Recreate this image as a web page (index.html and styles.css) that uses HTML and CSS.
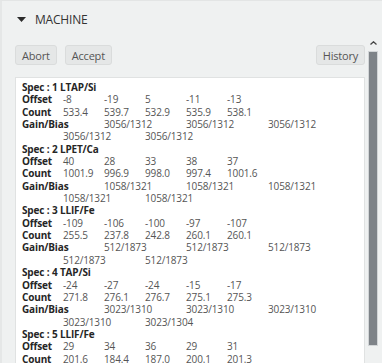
FILE: index.html
```html
<!DOCTYPE html>
<html>
<head>
<meta charset="utf-8">
<link rel="stylesheet" href="styles.css">
</head>
<body>
<div class="panel">
  <div class="header">
    <svg class="caret" width="9" height="5" viewBox="0 0 9 5"><path d="M0 0 H9 L4.5 5 Z" fill="#2b2b2b"/></svg>
    <span class="title">MACHINE</span>
  </div>
  <div class="body">
    <div class="main">
      <div class="toolbar">
        <button class="btn">Abort</button>
        <button class="btn">Accept</button>
        <span class="spacer"></span>
        <button class="btn">History</button>
      </div>
      <div class="log">
        <div class="spec">Spec : 1 LTAP/Si</div>
        <div class="row"><b>Offset</b><span>-8</span><span>-19</span><span>5</span><span>-11</span><span>-13</span></div>
        <div class="row"><b>Count</b><span>533.4</span><span>539.7</span><span>532.9</span><span>535.9</span><span>538.1</span></div>
        <div class="row gain"><b>Gain/Bias</b><span>3056/1312</span><span>3056/1312</span><span>3056/1312</span></div>
        <div class="row cont"><span>3056/1312</span><span>3056/1312</span></div>

        <div class="spec">Spec : 2 LPET/Ca</div>
        <div class="row"><b>Offset</b><span>40</span><span>28</span><span>33</span><span>38</span><span>37</span></div>
        <div class="row"><b>Count</b><span>1001.9</span><span>996.9</span><span>998.0</span><span>997.4</span><span>1001.6</span></div>
        <div class="row gain"><b>Gain/Bias</b><span>1058/1321</span><span>1058/1321</span><span>1058/1321</span></div>
        <div class="row cont"><span>1058/1321</span><span>1058/1321</span></div>

        <div class="spec">Spec : 3 LLIF/Fe</div>
        <div class="row"><b>Offset</b><span>-109</span><span>-106</span><span>-100</span><span>-97</span><span>-107</span></div>
        <div class="row"><b>Count</b><span>255.5</span><span>237.8</span><span>242.8</span><span>260.1</span><span>260.1</span></div>
        <div class="row gain"><b>Gain/Bias</b><span>512/1873</span><span>512/1873</span><span>512/1873</span></div>
        <div class="row cont"><span>512/1873</span><span>512/1873</span></div>

        <div class="spec">Spec : 4 TAP/Si</div>
        <div class="row"><b>Offset</b><span>-24</span><span>-27</span><span>-24</span><span>-15</span><span>-17</span></div>
        <div class="row"><b>Count</b><span>271.8</span><span>276.1</span><span>276.7</span><span>275.1</span><span>275.3</span></div>
        <div class="row gain"><b>Gain/Bias</b><span>3023/1310</span><span>3023/1310</span><span>3023/1310</span></div>
        <div class="row cont"><span>3023/1310</span><span>3023/1304</span></div>

        <div class="spec">Spec : 5 LLIF/Fe</div>
        <div class="row"><b>Offset</b><span>29</span><span>34</span><span>36</span><span>29</span><span>31</span></div>
        <div class="row"><b>Count</b><span>201.6</span><span>184.4</span><span>187.0</span><span>200.1</span><span>201.3</span></div>
      </div>
    </div>
    <div class="scrollbar">
      <svg class="arrow" width="7" height="4" viewBox="0 0 7 4"><path d="M0.5 3.5 L3.5 0.8 L6.5 3.5" fill="none" stroke="#444" stroke-width="1.3"/></svg>
      <div class="thumb"></div>
    </div>
  </div>
</div>
</body>
</html>
```
FILE: styles.css
```css
html, body {
  margin: 0;
  padding: 0;
}
body {
  background: #eff1f1;
  font-family: "Open Sans", "Noto Sans", sans-serif;
  overflow: hidden;
}
.panel {
  width: 382px;
  height: 363px;
  display: flex;
  flex-direction: column;
  box-sizing: border-box;
  border-left: 2px solid #e5e7e7;
  border-top: 1px solid #e3e5e5;
  overflow: hidden;
}
.header {
  height: 36px;
  display: flex;
  align-items: center;
  padding-left: 15px;
  gap: 9px;
  box-sizing: border-box;
}
.caret {
  display: block;
  margin-top: 1px;
}
.title {
  font-size: 12px;
  color: #333;
  letter-spacing: -0.2px;
}
.body {
  flex: 1;
  display: flex;
  min-height: 0;
}
.main {
  width: 350px;
  flex-shrink: 0;
  margin-left: 13px;
  display: flex;
  flex-direction: column;
}
.toolbar {
  display: flex;
  gap: 8px;
  margin-top: 8px;
  height: 20px;
}
.spacer {
  flex: 1;
}
.btn {
  font-family: "Open Sans", "Noto Sans", sans-serif;
  font-size: 11px;
  color: #555;
  background: #e5e7e7;
  border: 1px solid #dadcdc;
  border-radius: 3px;
  height: 20px;
  padding: 0 6px;
  line-height: 17px;
  letter-spacing: -0.2px;
}
.log {
  margin-top: 12px;
  flex: 1;
  background: #fff;
  border: 1px solid #e0e2e2;
  border-bottom: none;
  padding: 3px 6px 0 6px;
  font-size: 10px;
  line-height: 12.35px;
  color: #555;
  letter-spacing: -0.15px;
}
.spec {
  font-weight: 700;
  color: #262626;
  white-space: nowrap;
}
.row {
  display: grid;
  grid-template-columns: repeat(8, 41px);
  white-space: nowrap;
}
.row b {
  font-weight: 700;
  color: #262626;
}
.gain b,
.gain span,
.cont span {
  grid-column: span 2;
}
.cont span:first-child {
  grid-column: 2 / span 2;
}
.scrollbar {
  width: 12px;
  margin-left: 2px;
  display: flex;
  flex-direction: column;
  align-items: center;
}
.arrow {
  display: block;
  margin-top: 4px;
}
.thumb {
  margin-top: 6px;
  width: 10px;
  height: 295px;
  background: #7e8388;
  border: 1px solid #d2d5d7;
  box-sizing: border-box;
}
```
